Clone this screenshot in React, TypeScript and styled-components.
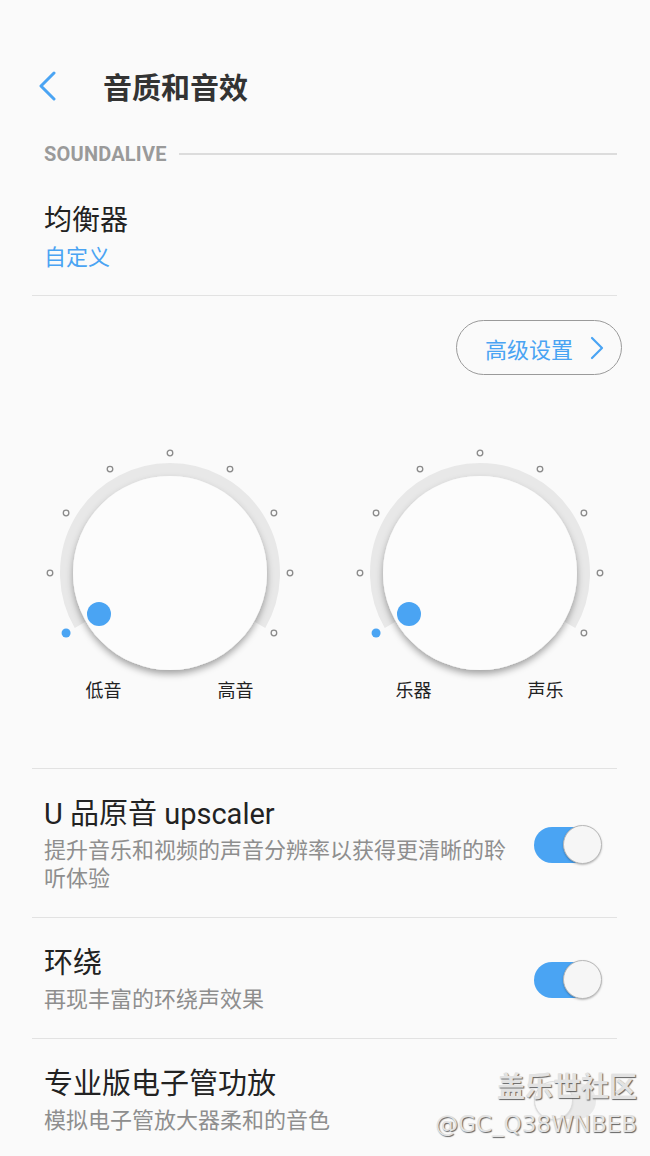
import styled, { createGlobalStyle } from "styled-components";

const BLUE = "#4aa4f3";

const GlobalStyle = createGlobalStyle`
  html, body {
    margin: 0;
    padding: 0;
    background: #fafafa;
  }
  body {
    font-family: Roboto, "Noto Sans CJK SC", sans-serif;
    color: #222;
  }
`;

const Page = styled.div`
  position: relative;
  width: 650px;
  height: 1156px;
  overflow: hidden;
  background: #fafafa;
`;

const Header = styled.header`
  display: flex;
  align-items: center;
  height: 56px;
  margin-top: 58px;
  padding-left: 38px;
`;

const BackButton = styled.div`
  display: flex;
  align-items: center;
  width: 65px;
`;

const Title = styled.h1`
  margin: 0;
  font-size: 29px;
  font-weight: 700;
  color: #333;
  font-family: "Noto Sans CJK SC", sans-serif;
`;

const SectionHeader = styled.div`
  display: flex;
  align-items: center;
  gap: 12px;
  height: 30px;
  margin: 25px 33px 0 44px;
`;

const SectionLabel = styled.span`
  font-family: Roboto, sans-serif;
  font-weight: 700;
  font-size: 20px;
  color: #9a9a9a;
  letter-spacing: 0.2px;
`;

const SectionLine = styled.div`
  flex: 1;
  height: 2px;
  background: #dcdcdc;
`;

const EqItem = styled.div`
  display: flex;
  flex-direction: column;
  margin: 0 33px 0 32px;
  padding: 34px 0 24px 12px;
  border-bottom: 1px solid #e2e2e2;
`;

const ItemTitle = styled.div`
  font-family: Roboto, "Noto Sans CJK SC", sans-serif;
  font-size: 28px;
  line-height: 36px;
  color: #222;
`;

const ItemValue = styled.div`
  font-family: "Noto Sans CJK SC", sans-serif;
  font-size: 22px;
  line-height: 32px;
  color: ${BLUE};
`;

const ButtonRow = styled.div`
  display: flex;
  justify-content: flex-end;
  padding: 24px 28px 0 0;
`;

const PillButton = styled.div`
  display: flex;
  align-items: center;
  gap: 16px;
  height: 53px;
  padding: 0 16px 0 28px;
  border: 1.5px solid #9a9a9a;
  border-radius: 30px;
  font-family: "Noto Sans CJK SC", sans-serif;
  font-size: 22px;
  color: ${BLUE};
`;

const KnobRow = styled.div`
  display: flex;
  gap: 50px;
  margin: 0 33px 0 32px;
  padding: 73px 0 67px 8px;
  border-bottom: 1px solid #e2e2e2;
`;

const KnobBlock = styled.div`
  display: flex;
  flex-direction: column;
  align-items: center;
  width: 260px;
`;

const KnobSvg = styled.svg`
  display: block;
  overflow: visible;
`;

const KnobLabels = styled.div`
  display: flex;
  justify-content: space-between;
  width: 168px;
  margin-left: -1px;
  font-family: "Noto Sans CJK SC", sans-serif;
  font-size: 18px;
  line-height: 24px;
  color: #222;
`;

const ToggleRow = styled.div<{ $last?: boolean }>`
  display: flex;
  align-items: center;
  margin: 0 33px 0 32px;
  padding: 29px 0 27px 12px;
  border-bottom: ${(p) => (p.$last ? "none" : "1px solid #e2e2e2")};
`;

const ToggleText = styled.div`
  display: flex;
  flex-direction: column;
  gap: 4px;
  width: 474px;
  margin-right: 16px;
`;

const RowTitle = styled.div`
  font-family: Roboto, "Noto Sans CJK SC", sans-serif;
  font-size: 29px;
  line-height: 32px;
  color: #222;
`;

const RowSub = styled.div`
  font-family: "Noto Sans CJK SC", sans-serif;
  font-size: 22px;
  line-height: 28px;
  color: #8e8e8e;
`;

const Switch = styled.div<{ $on: boolean }>`
  position: relative;
  flex: none;
  width: 68px;
  height: 39px;
  opacity: ${(p) => (p.$on ? 1 : 0.45)};
`;

const SwitchTrack = styled.div<{ $on: boolean }>`
  position: absolute;
  left: 0;
  top: 2px;
  width: 62px;
  height: 36px;
  border-radius: 18px;
  background: ${(p) => (p.$on ? BLUE : "#d6d6d6")};
`;

const SwitchThumb = styled.div<{ $on: boolean }>`
  position: absolute;
  top: 0;
  left: ${(p) => (p.$on ? "29px" : "0")};
  width: 37px;
  height: 37px;
  border-radius: 50%;
  background: #f6f6f6;
  border: 1px solid #b8b8b8;
  box-shadow: 0 1px 2px rgba(0, 0, 0, 0.25);
`;

const Watermark = styled.div`
  position: absolute;
  right: 13px;
  top: 1066px;
  display: flex;
  flex-direction: column;
  align-items: flex-end;
  color: #e2e2e2;
  text-shadow: 1px 1px 1px rgba(60, 60, 60, 0.8);
  pointer-events: none;
`;

const WatermarkTitle = styled.div`
  font-family: "Noto Sans CJK SC", sans-serif;
  font-size: 28px;
  line-height: 38px;
  font-weight: 700;
`;

const WatermarkId = styled.div`
  font-family: "DejaVu Sans", sans-serif;
  font-size: 23px;
  line-height: 30px;
  margin-top: 5px;
`;

function polar(cx: number, cy: number, r: number, deg: number) {
  const a = (deg * Math.PI) / 180;
  return { x: cx + r * Math.cos(a), y: cy - r * Math.sin(a) };
}

const Knob = ({ id, left, right }: { id: string; left: string; right: string }) => {
  const cx = 130;
  const cy = 125;
  const trackR = 103.5;
  const s = polar(cx, cy, trackR, 210);
  const e = polar(cx, cy, trackR, -30);
  const ticks = [210, 180, 150, 120, 90, 60, 30, 0, -30];
  const ind = polar(cx, cy, 82, 210);
  return (
    <KnobBlock>
      <KnobSvg width={260} height={229} viewBox="0 0 260 229">
        <defs>
          <filter id={`sh-${id}`} x="-20%" y="-20%" width="140%" height="150%">
            <feDropShadow dx="0" dy="4" stdDeviation="3.5" floodColor="#000" floodOpacity="0.35" />
          </filter>
        </defs>
        <path
          d={`M ${s.x} ${s.y} A ${trackR} ${trackR} 0 1 1 ${e.x} ${e.y}`}
          fill="none"
          stroke="#e8e8e8"
          strokeWidth={13}
        />
        {ticks.map((t, i) => {
          const p = polar(cx, cy, 120, t);
          return i === 0 ? (
            <circle key={t} cx={p.x} cy={p.y} r={4.5} fill={BLUE} />
          ) : (
            <circle key={t} cx={p.x} cy={p.y} r={2.8} fill="none" stroke="#8a8a8a" strokeWidth={1.3} />
          );
        })}
        <circle cx={cx} cy={cy} r={97} fill="#fcfcfc" filter={`url(#sh-${id})`} />
        <circle cx={ind.x} cy={ind.y} r={12} fill={BLUE} />
      </KnobSvg>
      <KnobLabels>
        <span>{left}</span>
        <span>{right}</span>
      </KnobLabels>
    </KnobBlock>
  );
};

export default function App() {
  return (
    <Page>
      <GlobalStyle />
      <Header>
        <BackButton>
          <svg width="22" height="30" viewBox="0 0 22 30">
            <path d="M16 2 L3 15 L16 28" fill="none" stroke={BLUE} strokeWidth={3} strokeLinecap="round" strokeLinejoin="round" />
          </svg>
        </BackButton>
        <Title>音质和音效</Title>
      </Header>

      <SectionHeader>
        <SectionLabel>SOUNDALIVE</SectionLabel>
        <SectionLine />
      </SectionHeader>

      <EqItem>
        <ItemTitle>均衡器</ItemTitle>
        <ItemValue>自定义</ItemValue>
      </EqItem>

      <ButtonRow>
        <PillButton>
          <span>高级设置</span>
          <svg width="16" height="24" viewBox="0 0 16 24">
            <path d="M3 2 L13 12 L3 22" fill="none" stroke={BLUE} strokeWidth={2.2} strokeLinecap="round" strokeLinejoin="round" />
          </svg>
        </PillButton>
      </ButtonRow>

      <KnobRow>
        <Knob id="a" left="低音" right="高音" />
        <Knob id="b" left="乐器" right="声乐" />
      </KnobRow>

      <ToggleRow>
        <ToggleText>
          <RowTitle>U 品原音 upscaler</RowTitle>
          <RowSub>提升音乐和视频的声音分辨率以获得更清晰的聆听体验</RowSub>
        </ToggleText>
        <Switch $on>
          <SwitchTrack $on />
          <SwitchThumb $on />
        </Switch>
      </ToggleRow>

      <ToggleRow>
        <ToggleText>
          <RowTitle>环绕</RowTitle>
          <RowSub>再现丰富的环绕声效果</RowSub>
        </ToggleText>
        <Switch $on>
          <SwitchTrack $on />
          <SwitchThumb $on />
        </Switch>
      </ToggleRow>

      <ToggleRow $last>
        <ToggleText>
          <RowTitle>专业版电子管功放</RowTitle>
          <RowSub>模拟电子管放大器柔和的音色</RowSub>
        </ToggleText>
        <Switch $on={false}>
          <SwitchTrack $on={false} />
          <SwitchThumb $on={false} />
        </Switch>
      </ToggleRow>

      <Watermark>
        <WatermarkTitle>盖乐世社区</WatermarkTitle>
        <WatermarkId>@GC_Q38WNBEB</WatermarkId>
      </Watermark>
    </Page>
  );
}
